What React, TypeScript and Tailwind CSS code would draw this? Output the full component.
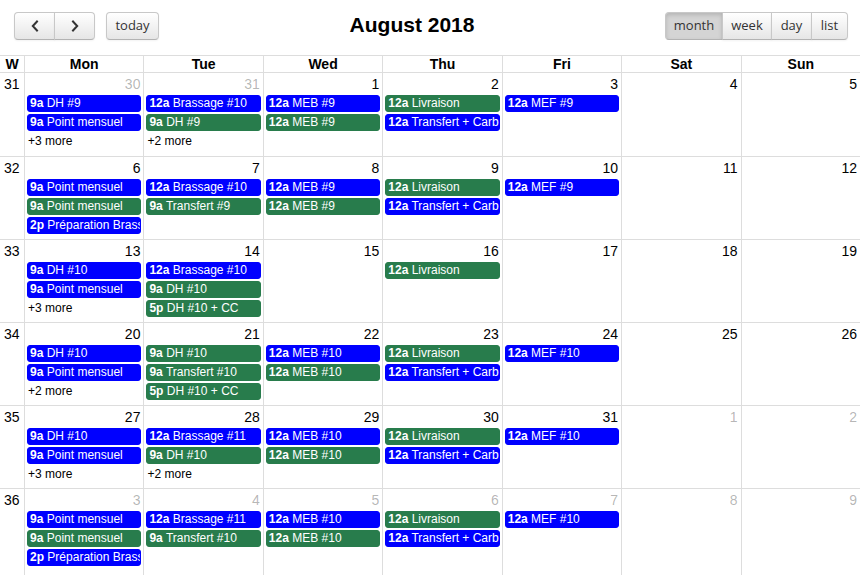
import React from 'react';

type Ev = { c: 'b' | 'g'; t: string; n: string };
type Day = { d: number; other?: boolean; ev?: Ev[]; more?: number };
type Week = { wk: number; days: Day[] };

const b = (t: string, n: string): Ev => ({ c: 'b', t, n });
const g = (t: string, n: string): Ev => ({ c: 'g', t, n });

const weeks: Week[] = [
  {
    wk: 31,
    days: [
      { d: 30, other: true, ev: [b('9a', 'DH #9'), b('9a', 'Point mensuel')], more: 3 },
      { d: 31, other: true, ev: [b('12a', 'Brassage #10'), g('9a', 'DH #9')], more: 2 },
      { d: 1, ev: [b('12a', 'MEB #9'), g('12a', 'MEB #9')] },
      { d: 2, ev: [g('12a', 'Livraison'), b('12a', 'Transfert + Carbonatation')] },
      { d: 3, ev: [b('12a', 'MEF #9')] },
      { d: 4 },
      { d: 5 },
    ],
  },
  {
    wk: 32,
    days: [
      { d: 6, ev: [b('9a', 'Point mensuel'), g('9a', 'Point mensuel'), b('2p', 'Préparation Brassage')] },
      { d: 7, ev: [b('12a', 'Brassage #10'), g('9a', 'Transfert #9')] },
      { d: 8, ev: [b('12a', 'MEB #9'), g('12a', 'MEB #9')] },
      { d: 9, ev: [g('12a', 'Livraison'), b('12a', 'Transfert + Carbonatation')] },
      { d: 10, ev: [b('12a', 'MEF #9')] },
      { d: 11 },
      { d: 12 },
    ],
  },
  {
    wk: 33,
    days: [
      { d: 13, ev: [b('9a', 'DH #10'), b('9a', 'Point mensuel')], more: 3 },
      { d: 14, ev: [b('12a', 'Brassage #10'), g('9a', 'DH #10'), g('5p', 'DH #10 + CC')] },
      { d: 15 },
      { d: 16, ev: [g('12a', 'Livraison')] },
      { d: 17 },
      { d: 18 },
      { d: 19 },
    ],
  },
  {
    wk: 34,
    days: [
      { d: 20, ev: [b('9a', 'DH #10'), b('9a', 'Point mensuel')], more: 2 },
      { d: 21, ev: [g('9a', 'DH #10'), g('9a', 'Transfert #10'), g('5p', 'DH #10 + CC')] },
      { d: 22, ev: [b('12a', 'MEB #10'), g('12a', 'MEB #10')] },
      { d: 23, ev: [g('12a', 'Livraison'), b('12a', 'Transfert + Carbonatation')] },
      { d: 24, ev: [b('12a', 'MEF #10')] },
      { d: 25 },
      { d: 26 },
    ],
  },
  {
    wk: 35,
    days: [
      { d: 27, ev: [b('9a', 'DH #10'), b('9a', 'Point mensuel')], more: 3 },
      { d: 28, ev: [b('12a', 'Brassage #11'), g('9a', 'DH #10')], more: 2 },
      { d: 29, ev: [b('12a', 'MEB #10'), g('12a', 'MEB #10')] },
      { d: 30, ev: [g('12a', 'Livraison'), b('12a', 'Transfert + Carbonatation')] },
      { d: 31, ev: [b('12a', 'MEF #10')] },
      { d: 1, other: true },
      { d: 2, other: true },
    ],
  },
  {
    wk: 36,
    days: [
      { d: 3, other: true, ev: [b('9a', 'Point mensuel'), g('9a', 'Point mensuel'), b('2p', 'Préparation Brassage')] },
      { d: 4, other: true, ev: [b('12a', 'Brassage #11'), g('9a', 'Transfert #10')] },
      { d: 5, other: true, ev: [b('12a', 'MEB #10'), g('12a', 'MEB #10')] },
      { d: 6, other: true, ev: [g('12a', 'Livraison'), b('12a', 'Transfert + Carbonatation')] },
      { d: 7, other: true, ev: [b('12a', 'MEF #10')] },
      { d: 8, other: true },
      { d: 9, other: true },
    ],
  },
];

const dayNames = ['Mon', 'Tue', 'Wed', 'Thu', 'Fri', 'Sat', 'Sun'];

const btn =
  "h-[28px] px-[9px] flex items-center justify-center border border-[#c8c8c8] border-b-[#b3b3b3] bg-linear-to-b from-white to-[#e6e6e6] text-[#333] text-[13px] shadow-[0_1px_2px_rgba(0,0,0,0.05)] font-['Open_Sans',sans-serif]";

const Chevron = ({ dir }: { dir: 'l' | 'r' }) => (
  <svg width="8" height="12" viewBox="0 0 8 12" fill="none">
    <polyline
      points={dir === 'l' ? '6,1.5 1.8,6 6,10.5' : '2,1.5 6.2,6 2,10.5'}
      stroke="#333"
      strokeWidth="2"
      strokeLinecap="square"
    />
  </svg>
);

const EventBar = ({ ev }: { ev: Ev }) => (
  <div
    className={`mx-[2px] mb-[2px] h-[17px] rounded-[3px] px-[2px] text-white text-[12px] leading-[15px] whitespace-nowrap overflow-hidden border ${
      ev.c === 'b' ? 'bg-[#0000ff] border-[#0000ff]' : 'bg-[#287c4c] border-[#287c4c]'
    }`}
  >
    <span className="font-bold">{ev.t}</span> {ev.n}
  </div>
);

export default function App() {
  return (
    <div className="w-[860px] bg-white text-black font-['Liberation_Sans',Arial,sans-serif] overflow-hidden">
      <div className="flex items-center justify-between pl-[14px] pr-[12px] pt-[12px] h-[40px]">
        <div className="flex items-center gap-[11px]">
          <div className="flex">
            <button className={`${btn} w-[41px] rounded-l-[4px]`}>
              <Chevron dir="l" />
            </button>
            <button className={`${btn} w-[41px] rounded-r-[4px] -ml-px`}>
              <Chevron dir="r" />
            </button>
          </div>
          <button className={`${btn} w-[53px] rounded-[4px]`}>today</button>
        </div>
        <h2 className="text-[21px] font-bold leading-none mb-[4px]">August 2018</h2>
        <div className="flex">
          <button className={`${btn} w-[58px] rounded-l-[4px] !bg-none !bg-[#d4d4d4] !shadow-[inset_0_2px_4px_rgba(0,0,0,0.15)]`}>
            month
          </button>
          <button className={`${btn} w-[50px] -ml-px`}>week</button>
          <button className={`${btn} w-[41px] -ml-px`}>day</button>
          <button className={`${btn} w-[37px] -ml-px rounded-r-[4px]`}>list</button>
        </div>
      </div>

      <div className="mt-[15px] border-t border-[#ddd]">
        <div className="grid grid-cols-[24px_repeat(7,1fr)] h-[17px] border-b border-[#ddd] text-[14px] font-bold leading-[16px]">
          <div className="text-center">W</div>
          {dayNames.map((n) => (
            <div key={n} className="border-l border-[#ddd] text-center">
              {n}
            </div>
          ))}
        </div>
        {weeks.map((w, i) => (
          <div
            key={w.wk}
            className={`grid grid-cols-[24px_repeat(7,1fr)] ${i > 0 ? 'border-t border-[#ddd]' : ''} ${
              i === weeks.length - 1 ? 'h-[95px]' : 'h-[83px]'
            }`}
          >
            <div className="pl-[4px] pt-[3px] text-[14px] leading-[16px]">{w.wk}</div>
            {w.days.map((d, j) => (
              <div key={j} className="border-l border-[#ddd] min-w-0">
                <div
                  className={`h-[22px] pt-[3px] pr-[3px] text-right text-[14px] leading-[16px] ${
                    d.other ? 'text-black/30' : ''
                  }`}
                >
                  {d.d}
                </div>
                {d.ev?.map((ev, k) => <EventBar key={k} ev={ev} />)}
                {d.more ? (
                  <div className="pl-[3px] text-[12px] leading-[14px] pt-[1px]">+{d.more} more</div>
                ) : null}
              </div>
            ))}
          </div>
        ))}
      </div>
    </div>
  );
}
